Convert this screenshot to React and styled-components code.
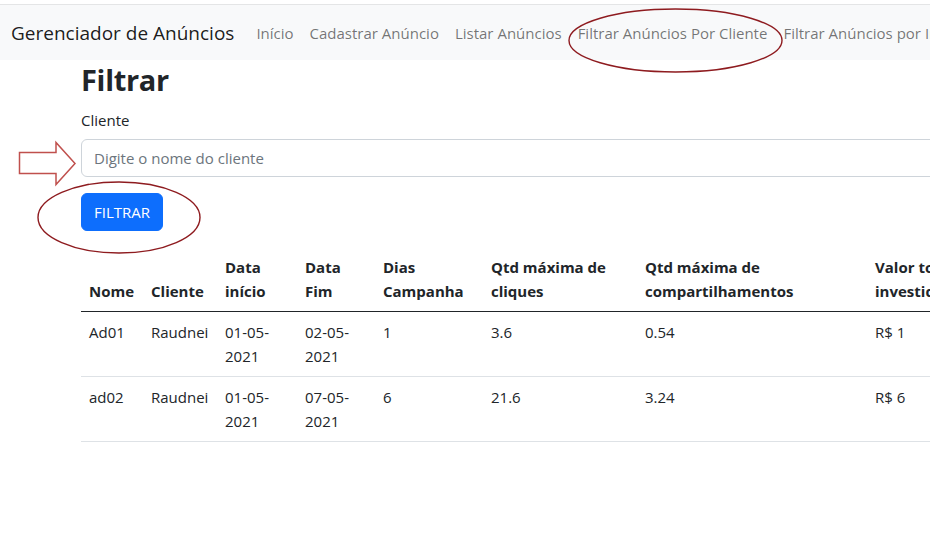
import React from "react";
import styled, { createGlobalStyle } from "styled-components";

const GlobalStyle = createGlobalStyle`
  html, body { margin: 0; padding: 0; overflow: hidden; background: #fff; }
  body {
    font-family: "Open Sans", "Noto Sans", sans-serif;
    font-size: 15px;
    line-height: 24px;
    color: #212529;
  }
  * { box-sizing: border-box; }
`;

const Page = styled.div`
  position: relative;
  width: 1120px;
  min-height: 541px;
`;

const Navbar = styled.nav`
  margin-top: 4px;
  border-top: 1px solid #e4e5e6;
  background: #f8f9fa;
  height: 56px;
  display: flex;
  align-items: center;
  padding: 0 11px;
  white-space: nowrap;
`;

const Brand = styled.a`
  font-size: 19px;
  line-height: 30px;
  color: rgba(0, 0, 0, 0.9);
  margin-right: 14px;
  text-decoration: none;
`;

const NavList = styled.ul`
  display: flex;
  list-style: none;
  margin: 0;
  padding: 0;
`;

const NavLink = styled.a`
  display: block;
  padding: 8px;
  color: rgba(0, 0, 0, 0.55);
  text-decoration: none;
`;

const Main = styled.main`
  padding-left: 81px;
  width: 1100px;
`;

const Title = styled.h1`
  margin: 0 0 8px;
  font-size: 29px;
  line-height: 40px;
  font-weight: 700;
  letter-spacing: -0.3px;
`;

const Label = styled.label`
  display: block;
  margin-bottom: 7px;
`;

const Input = styled.input`
  display: block;
  width: 1000px;
  height: 38px;
  padding: 6px 12px;
  font: inherit;
  color: #212529;
  border: 1px solid #ced4da;
  border-radius: 6px;
  outline: none;
  &::placeholder { color: #6c757d; }
`;

const Button = styled.button`
  display: block;
  margin-top: 16px;
  height: 38px;
  padding: 6px 12px;
  font: inherit;
  color: #fff;
  background: #0d6efd;
  border: 1px solid #0d6efd;
  border-radius: 6px;
`;

const Table = styled.table`
  margin-top: 16px;
  border-collapse: collapse;
  table-layout: fixed;
  width: 1000px;
`;

const Th = styled.th`
  padding: 8px;
  text-align: left;
  vertical-align: bottom;
  font-weight: 700;
  border-bottom: 1px solid #212529;
`;

const Td = styled.td`
  padding: 8px;
  vertical-align: top;
  border-bottom: 1px solid #dee2e6;
`;

const Overlay = styled.svg`
  position: absolute;
  left: 0;
  top: 0;
  width: 930px;
  height: 541px;
  pointer-events: none;
  overflow: visible;
`;

const cols = [62, 74, 80, 78, 108, 154, 230, 160, 54];
const headers = ["Nome", "Cliente", "Data início", "Data Fim", "Dias Campanha", "Qtd máxima de cliques", "Qtd máxima de compartilhamentos", "Valor total investido"];
const rows = [
  ["Ad01", "Raudnei", "01-05-2021", "02-05-2021", "1", "3.6", "0.54", "R$ 1"],
  ["ad02", "Raudnei", "01-05-2021", "07-05-2021", "6", "21.6", "3.24", "R$ 6"],
];
const links = ["Início", "Cadastrar Anúncio", "Listar Anúncios", "Filtrar Anúncios Por Cliente", "Filtrar Anúncios por Intervalo de Tempo"];

export default function App() {
  return (
    <Page>
      <GlobalStyle />
      <Navbar>
        <Brand href="#">Gerenciador de Anúncios</Brand>
        <NavList>
          {links.map((l) => (
            <li key={l}><NavLink href="#">{l}</NavLink></li>
          ))}
        </NavList>
      </Navbar>
      <Main>
        <Title>Filtrar</Title>
        <Label htmlFor="cliente">Cliente</Label>
        <Input id="cliente" placeholder="Digite o nome do cliente" />
        <Button>FILTRAR</Button>
        <Table>
          <colgroup>
            {cols.map((w, i) => <col key={i} width={w} />)}
          </colgroup>
          <thead>
            <tr>
              {headers.map((h) => <Th key={h}>{h}</Th>)}
              <Th />
            </tr>
          </thead>
          <tbody>
            {rows.map((r) => (
              <tr key={r[0]}>
                {r.map((c, i) => <Td key={i}>{c}</Td>)}
                <Td />
              </tr>
            ))}
          </tbody>
        </Table>
      </Main>
      <Overlay viewBox="0 0 930 541">
        <ellipse cx="675.5" cy="36.5" rx="106.5" ry="31.5" fill="none" stroke="#8e1b1f" strokeWidth="1.4" />
        <ellipse cx="119" cy="213.5" rx="81" ry="35.5" fill="none" stroke="#8e1b1f" strokeWidth="1.4" />
        <path d="M19.5 148.5 H56 V138.5 L75 159.5 L56 180.5 V169.5 H19.5 Z" fill="#fff" stroke="#c0504d" strokeWidth="1.5" strokeLinejoin="miter" />
      </Overlay>
    </Page>
  );
}
